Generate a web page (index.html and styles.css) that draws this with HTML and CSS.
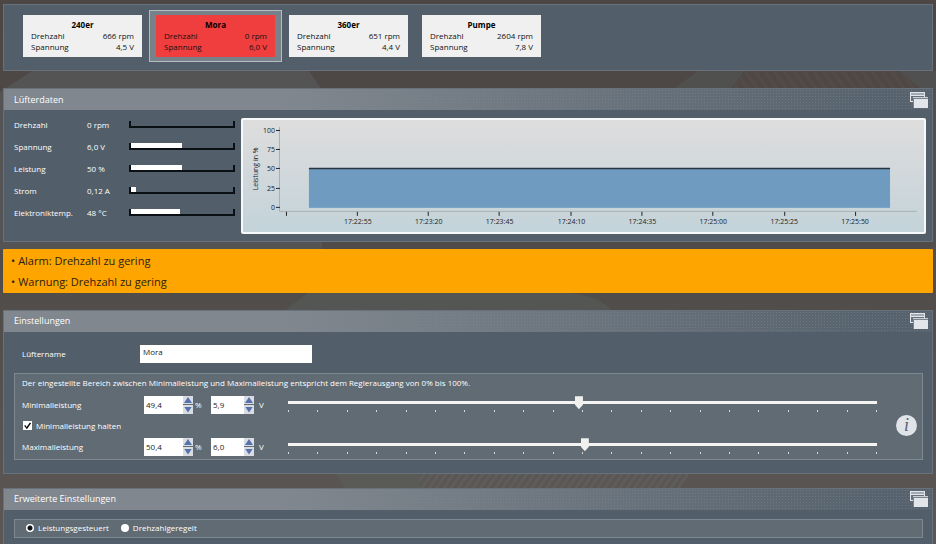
FILE: index.html
```html
<!doctype html>
<html lang="de">
<head>
    <meta charset="utf-8">
    <meta name="viewport" content="width=device-width, initial-scale=1">
    <title>Lüfter</title>
    <link rel="stylesheet" href="styles.css">
</head>
<body>
    <svg class="backdrop" viewBox="0 0 936 544" preserveAspectRatio="none" aria-hidden="true">
        <defs>
            <pattern id="stripes" width="8" height="8" patternUnits="userSpaceOnUse" patternTransform="rotate(-35)">
                <rect width="3" height="8" fill="#554a47"/>
            </pattern>
            <pattern id="stripesBack" width="6" height="6" patternUnits="userSpaceOnUse" patternTransform="rotate(35)">
                <rect width="6" height="6" fill="#595755"/>
                <rect width="3" height="6" fill="#5f5c59"/>
            </pattern>
        </defs>
        <path d="M0 92 L32 71 H309 L322 90 V250 H0z" fill="#545454"/>
        <path d="M698 71 H744 L730 90 H672z" fill="#50514f"/>
        <path d="M744 71 H900 L922 90 H730z" fill="url(#stripes)"/>
        <path d="M900 71 H936 V310 L922 90z" fill="#505050"/>
        <path d="M284 311 L308 293 H570 Q600 296 612 311z" fill="#545653"/>
        <path d="M335 473 H420 V488 H345z" fill="#5a5b57"/>
        <path d="M420 473 H690 L680 488 H420z" fill="url(#stripesBack)"/>
    </svg>

    <nav class="panel fans">
        <button type="button" class="fan">
            <span class="fan-card">
                <strong>240er</strong>
                <span class="fan-row"><span>Drehzahl</span><span>666 rpm</span></span>
                <span class="fan-row"><span>Spannung</span><span>4,5 V</span></span>
            </span>
        </button>
        <button type="button" class="fan selected">
            <span class="fan-card alarm">
                <strong>Mora</strong>
                <span class="fan-row"><span>Drehzahl</span><span>0 rpm</span></span>
                <span class="fan-row"><span>Spannung</span><span>6,0 V</span></span>
            </span>
        </button>
        <button type="button" class="fan">
            <span class="fan-card">
                <strong>360er</strong>
                <span class="fan-row"><span>Drehzahl</span><span>651 rpm</span></span>
                <span class="fan-row"><span>Spannung</span><span>4,4 V</span></span>
            </span>
        </button>
        <button type="button" class="fan">
            <span class="fan-card">
                <strong>Pumpe</strong>
                <span class="fan-row"><span>Drehzahl</span><span>2604 rpm</span></span>
                <span class="fan-row"><span>Spannung</span><span>7,8 V</span></span>
            </span>
        </button>
    </nav>

    <section class="panel fan-data">
        <header class="panel-header">
            <h2>Lüfterdaten</h2>
            <button type="button" class="windows" aria-label="Fenster">
                <svg width="18" height="16" viewBox="0 0 18 16"><path d="M0 0H15V10H0z" fill="#e2e5ea"/><path d="M1 1.500H14V2.500H1zM1 4H14V9H1z" fill="#65707a"/><path d="M3 5H18V16H3z" fill="#7c858e"/><path d="M3 5H18V6H3z" fill="#c9ced4"/><path d="M4 7H18V16H4z" fill="#e2e5ea"/></svg>
            </button>
        </header>
        <div class="data-body">
            <dl class="readings">
                <dt>Drehzahl</dt><dd>0 rpm</dd><dd class="gauge"><span style="width: 0%"></span></dd>
                <dt>Spannung</dt><dd>6,0 V</dd><dd class="gauge"><span style="width: 50%"></span></dd>
                <dt>Leistung</dt><dd>50 %</dd><dd class="gauge"><span style="width: 50%"></span></dd>
                <dt>Strom</dt><dd>0,12 A</dd><dd class="gauge"><span style="width: 5%"></span></dd>
                <dt>Elektroniktemp.</dt><dd>48 °C</dd><dd class="gauge"><span style="width: 48%"></span></dd>
            </dl>
            <div class="chart">
                <svg viewBox="0 0 682 112" role="img" aria-label="Leistung in %">
                    <rect x="66" y="49" width="582" height="39" fill="#6f9bc0"/>
                    <path d="M66 48.500H648" stroke="#273440" stroke-width="1.500"/>
                    <path d="M36.500 7V91.500H675" fill="none" stroke="#a9b0b3"/>
                    <path d="M33 10.500H37M33 29.500H37M33 48.500H37M33 68.500H37M33 87.500H37M43.500 92V96M114.500 92V96M185.500 92V96M256.500 92V96M328.500 92V96M399.500 92V96M470.500 92V96M542.500 92V96M613.500 92V96" stroke="#222"/>
                    <g text-anchor="end">
                        <text x="32" y="13">100</text>
                        <text x="32" y="32">75</text>
                        <text x="32" y="51">50</text>
                        <text x="32" y="71">25</text>
                        <text x="32" y="90">0</text>
                    </g>
                    <g text-anchor="middle">
                        <text x="115" y="104">17:22:55</text>
                        <text x="186" y="104">17:23:20</text>
                        <text x="257" y="104">17:23:45</text>
                        <text x="329" y="104">17:24:10</text>
                        <text x="400" y="104">17:24:35</text>
                        <text x="471" y="104">17:25:00</text>
                        <text x="542" y="104">17:25:25</text>
                        <text x="613" y="104">17:25:50</text>
                        <text transform="translate(15 49) rotate(-90)">Leistung in %</text>
                    </g>
                </svg>
            </div>
        </div>
    </section>

    <ul class="messages">
        <li>Alarm: Drehzahl zu gering</li>
        <li>Warnung: Drehzahl zu gering</li>
    </ul>

    <section class="panel settings">
        <header class="panel-header">
            <h2>Einstellungen</h2>
            <button type="button" class="windows" aria-label="Fenster">
                <svg width="18" height="16" viewBox="0 0 18 16"><path d="M0 0H15V10H0z" fill="#e2e5ea"/><path d="M1 1.500H14V2.500H1zM1 4H14V9H1z" fill="#65707a"/><path d="M3 5H18V16H3z" fill="#7c858e"/><path d="M3 5H18V6H3z" fill="#c9ced4"/><path d="M4 7H18V16H4z" fill="#e2e5ea"/></svg>
            </button>
        </header>
        <div class="name-row">
            <label for="fanName">Lüftername</label>
            <input type="text" id="fanName" value="Mora">
        </div>
        <div class="box range-box">
            <div class="range-main">
                <p>Der eingestellte Bereich zwischen Minimalleistung und Maximalleistung entspricht dem Reglerausgang von 0% bis 100%.</p>
                <div class="power-row">
                    <label for="minPercent">Minimalleistung</label>
                    <div class="spinner">
                        <input type="text" id="minPercent" value="49,4">
                        <div class="steps"><button type="button" class="up" aria-label="Mehr"></button><button type="button" class="down" aria-label="Weniger"></button></div>
                    </div>
                    <span class="unit">%</span>
                    <div class="spinner volt">
                        <input type="text" value="5,9" aria-label="Minimalspannung">
                        <div class="steps"><button type="button" class="up" aria-label="Mehr"></button><button type="button" class="down" aria-label="Weniger"></button></div>
                    </div>
                    <span class="unit">V</span>
                    <div class="slider">
                        <input type="range" min="0" max="100" step="0.1" value="49.4" aria-label="Minimalleistung">
                        <div class="ticks"></div>
                    </div>
                </div>
                <label class="check"><input type="checkbox" checked>Minimalleistung halten</label>
                <div class="power-row">
                    <label for="maxPercent">Maximalleistung</label>
                    <div class="spinner">
                        <input type="text" id="maxPercent" value="50,4">
                        <div class="steps"><button type="button" class="up" aria-label="Mehr"></button><button type="button" class="down" aria-label="Weniger"></button></div>
                    </div>
                    <span class="unit">%</span>
                    <div class="spinner volt">
                        <input type="text" value="6,0" aria-label="Maximalspannung">
                        <div class="steps"><button type="button" class="up" aria-label="Mehr"></button><button type="button" class="down" aria-label="Weniger"></button></div>
                    </div>
                    <span class="unit">V</span>
                    <div class="slider">
                        <input type="range" min="0" max="100" step="0.1" value="50.4" aria-label="Maximalleistung">
                        <div class="ticks"></div>
                    </div>
                </div>
            </div>
            <button type="button" class="info" aria-label="Info">i</button>
        </div>
    </section>

    <section class="panel advanced">
        <header class="panel-header">
            <h2>Erweiterte Einstellungen</h2>
            <button type="button" class="windows" aria-label="Fenster">
                <svg width="18" height="16" viewBox="0 0 18 16"><path d="M0 0H15V10H0z" fill="#e2e5ea"/><path d="M1 1.500H14V2.500H1zM1 4H14V9H1z" fill="#65707a"/><path d="M3 5H18V16H3z" fill="#7c858e"/><path d="M3 5H18V6H3z" fill="#c9ced4"/><path d="M4 7H18V16H4z" fill="#e2e5ea"/></svg>
            </button>
        </header>
        <div class="box modes">
            <label><input type="radio" name="mode" checked>Leistungsgesteuert</label>
            <label><input type="radio" name="mode">Drehzahlgeregelt</label>
        </div>
    </section>
</body>
</html>
```
FILE: styles.css
```css
* {
    box-sizing: border-box;
}
html {
    background: #4d4846;
}
body {
    position: relative;
    z-index: 0;
    display: flex;
    flex-direction: column;
    margin: 0;
    padding: 4px 3px 0 3px;
    min-height: 100vh;
    background: linear-gradient(#4c4644, #504c4a 50%, #5c5755);
    font-family: "Open Sans", "Noto Sans", sans-serif;
    font-size: 8px;
    line-height: 12px;
    color: #fff;
}
h2, p, dl, dd, ul {
    margin: 0;
    padding: 0;
}
button, input {
    font: inherit;
    margin: 0;
    padding: 0;
    border: 0;
}
.backdrop {
    position: absolute;
    inset: 0;
    width: 100%;
    height: 100%;
    z-index: -1;
}
.panel {
    background: #525e69;
    border: 1px solid #69727a;
}
.panel-header {
    display: flex;
    align-items: center;
    justify-content: space-between;
    height: 21px;
    padding: 0 4px 0 10px;
    background:
        linear-gradient(to right, #80878f 30%, transparent 95%),
        radial-gradient(#6a757f 1px, transparent 1px) 0 0 / 3px 3px,
        #56626d;
}
.panel-header h2 {
    font-size: 9px;
    font-weight: 400;
}
.windows {
    background: none;
    height: 16px;
}
.windows svg {
    display: block;
}
.box {
    background: #606b74;
    border: 1px solid #7e8890;
}

/* fan selection */
.fans {
    display: flex;
    padding: 5px 12px 8px;
    margin-bottom: 17px;
}
.fan {
    width: 133px;
    padding: 4px 6px;
    border: 1px solid transparent;
    background: none;
    color: #111;
}
.fan.selected {
    background: #76818a;
    border-color: #b4bcc2;
}
.fan-card {
    display: block;
    background: #f0f0f0;
    padding: 4px 8px 5px;
    line-height: 11px;
}
.fan-card.alarm {
    background: #f03e3e;
}
.fan strong {
    display: block;
    text-align: center;
    color: #000;
}
.fan-row {
    display: flex;
    justify-content: space-between;
}

/* live data */
.data-body {
    display: flex;
    gap: 6px;
    padding: 8px 6px 7px 10px;
}
.readings {
    display: grid;
    grid-template-columns: 73px 42px 106px;
    grid-auto-rows: 22px;
    padding-top: 1px;
}
.readings .gauge {
    height: 7px;
    margin-top: 2px;
    border: 2px solid #0b1015;
    border-top: 0;
}
.gauge span {
    display: block;
    height: 5px;
    background: #fff;
}
.chart {
    flex: 1;
    border: 2px solid #f6f8f9;
    border-radius: 2px;
    background: linear-gradient(#dedddd, #c3d3da);
}
.chart svg {
    display: block;
    width: 100%;
}
.chart text {
    font-size: 7px;
    fill: #222;
}

.messages {
    list-style: none;
    margin: 7px 0 17px;
    padding: 1px 8px;
    background: #ffa500;
    color: #2a2113;
    border-radius: 1px;
    font-size: 11px;
    line-height: 21px;
}
.messages li::before {
    content: "•";
    margin-right: 3px;
}

/* settings */
.settings {
    padding-bottom: 13px;
    margin-bottom: 14px;
}
.name-row {
    display: flex;
    align-items: center;
    padding: 13px 18px 10px;
}
.name-row label {
    width: 118px;
}
.name-row input {
    width: 172px;
    height: 18px;
    padding: 0 3px 4px;
    background: #fff;
    color: #222;
}
.range-box {
    display: flex;
    align-items: center;
    margin: 0 9px 0 10px;
    padding: 3px 5px 2px 7px;
}
.range-main {
    flex: 1;
}
.power-row {
    display: flex;
    align-items: center;
    height: 20px;
}
p + .power-row {
    margin-top: 6px;
}
.power-row > label {
    width: 122px;
}
.spinner {
    display: flex;
    width: 49px;
    height: 18px;
}
.spinner.volt {
    width: 43px;
}
.spinner input {
    flex: 1;
    min-width: 0;
    padding-left: 2px;
    background: #fff;
    color: #222;
}
.steps {
    display: flex;
    flex-direction: column;
    gap: 1px;
    width: 10px;
}
.steps button {
    flex: 1;
    min-height: 0;
    background: #d9dce0;
}
.steps button::before {
    content: "";
    display: block;
    height: 6px;
    margin: 0 1px;
    background: #5672ad;
}
.steps .up::before {
    clip-path: polygon(50% 0, 100% 100%, 0 100%);
}
.steps .down::before {
    clip-path: polygon(0 0, 100% 0, 50% 100%);
}
.unit {
    width: 18px;
    padding-left: 2px;
}
.volt + .unit {
    width: 34px;
    padding-left: 5px;
}
.slider {
    flex: 1;
    margin-right: 19px;
    padding-bottom: 1px;
}
.slider input {
    display: block;
    appearance: none;
    width: calc(100% + 8px);
    height: 13px;
    margin: 0 -4px;
    background: linear-gradient(#f4f4f2, #f4f4f2) center 5px / calc(100% - 8px) 3px no-repeat;
}
.slider input::-webkit-slider-thumb {
    appearance: none;
    width: 8px;
    height: 13px;
    background: #f0f0ee;
    clip-path: polygon(0 0, 100% 0, 100% 65%, 50% 100%, 0 65%);
}
.ticks {
    height: 2px;
    margin-top: 1px;
    border-right: 1px solid #d5d9dc;
    background: repeating-linear-gradient(to right, #d5d9dc 0 1px, transparent 1px 5%);
}
.check {
    display: flex;
    align-items: center;
    height: 22px;
}
.check input {
    appearance: none;
    width: 9px;
    height: 9px;
    margin: 0 4px 0 1px;
    background: #fff;
}
.check input:checked::before {
    content: "";
    display: block;
    height: 9px;
    background: #111;
    clip-path: polygon(12% 48%, 26% 40%, 40% 62%, 76% 12%, 90% 22%, 44% 88%);
}
.info {
    align-self: flex-end;
    width: 21px;
    height: 21px;
    margin-bottom: 21px;
    border-radius: 50%;
    background: #e0e4e9;
    color: #57626c;
    font: italic 18px/20px "Liberation Serif", serif;
}

/* advanced */
.advanced {
    flex: 1;
    border-bottom: 0;
}
.modes {
    display: flex;
    align-items: center;
    gap: 12px;
    margin: 9px 9px 6px 10px;
    height: 19px;
    padding: 0 11px;
}
.modes label {
    display: flex;
    align-items: center;
    gap: 4px;
}
.modes input {
    appearance: none;
    width: 8px;
    height: 8px;
    border-radius: 50%;
    background: #fff;
}
.modes input:checked {
    background: radial-gradient(#111 2px, #fff 3px);
}
```
